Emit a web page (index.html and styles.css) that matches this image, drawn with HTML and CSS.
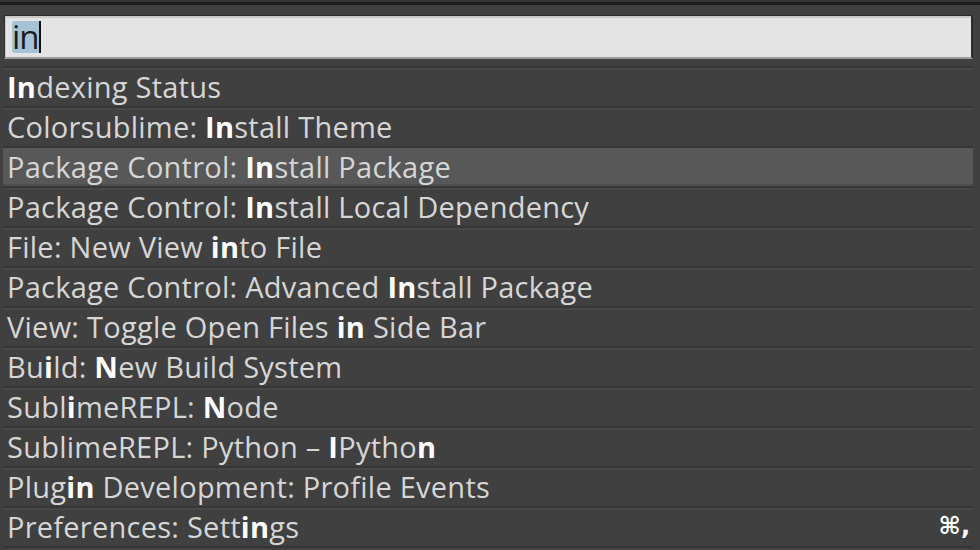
FILE: index.html
```html
<!DOCTYPE html>
<html>
<head>
<meta charset="utf-8">
<link rel="stylesheet" href="styles.css">
</head>
<body>
<div class="top-bar"></div>
<div class="panel">
  <div class="query"><span class="sel">in</span><span class="caret"></span></div>
  <ul class="list">
    <li class="row"><span class="label"><b>In</b>dexing Status</span></li>
    <li class="row"><span class="label">Colorsublime: <b>In</b>stall Theme</span></li>
    <li class="row selected"><span class="label">Package Control: <b>In</b>stall Package</span></li>
    <li class="row"><span class="label">Package Control: <b>In</b>stall Local Dependency</span></li>
    <li class="row"><span class="label">File: New View <b>in</b>to File</span></li>
    <li class="row"><span class="label">Package Control: Advanced <b>In</b>stall Package</span></li>
    <li class="row"><span class="label">View: Toggle Open Files <b>in</b> Side Bar</span></li>
    <li class="row"><span class="label">Bu<b>i</b>ld: <b>N</b>ew Build System</span></li>
    <li class="row"><span class="label">Subl<b>i</b>meREPL: <b>N</b>ode</span></li>
    <li class="row"><span class="label">SublimeREPL: Python – <b>I</b>Pytho<b>n</b></span></li>
    <li class="row"><span class="label">Plug<b>in</b> Development: Profile Events</span></li>
    <li class="row"><span class="label">Preferences: Sett<b>in</b>gs</span><span class="key">⌘,</span></li>
  </ul>
</div>
</body>
</html>
```
FILE: styles.css
```css
html, body {
  margin: 0;
  padding: 0;
  background: #404040;
  width: 980px;
  height: 550px;
  overflow: hidden;
}
body {
  font-family: "Open Sans", "DejaVu Sans", sans-serif;
}
.top-bar {
  height: 3px;
  border-top: 2px solid #363636;
  background: #1d1d1d;
}
.panel {
  padding: 10px 7px 0 3px;
}
.query {
  box-sizing: border-box;
  height: 44px;
  margin-left: 1px;
  background: #e4e4e4;
  border-top: 1px solid #2b2b2b;
  border-left: 1px solid #2b2b2b;
  border-right: 2px solid #2b2b2b;
  border-bottom: 2px solid #9c9c9c;
  box-shadow: inset 0 2px 0 #c9c9c9, inset 1px 0 0 #cfcfcf;
  display: flex;
  align-items: center;
  padding-left: 7px;
}
.sel {
  background: #a6c2d6;
  border-radius: 3px;
  color: #1c1c1c;
  font-size: 33px;
  line-height: 32px;
  height: 32px;
  letter-spacing: -1px;
  padding: 0 1px 0 0;
}
.caret {
  display: inline-block;
  width: 2px;
  height: 32px;
  background: #111;
  margin-left: -1px;
}
.list {
  list-style: none;
  margin: 7px 0 0 0;
  padding: 0;
  border-bottom: 2px solid #363636;
}
.row {
  box-sizing: border-box;
  height: 40px;
  border-top: 2px solid #363636;
  box-shadow: inset 0 2px 0 #474747;
  padding: 0 3px 0 4px;
  font-size: 29px;
  line-height: 37px;
  letter-spacing: 0.25px;
  color: #d6d6d6;
  white-space: nowrap;
  display: flex;
  justify-content: space-between;
}
.row b {
  color: #ffffff;
  font-weight: 700;
}
.row.selected {
  background: #585858;
  box-shadow: inset 0 -2px 0 #4e4e4e;
}
.key {
  font-family: "DejaVu Sans", sans-serif;
  font-weight: 700;
  color: #ffffff;
  font-size: 24px;
  letter-spacing: 0;
}
```
